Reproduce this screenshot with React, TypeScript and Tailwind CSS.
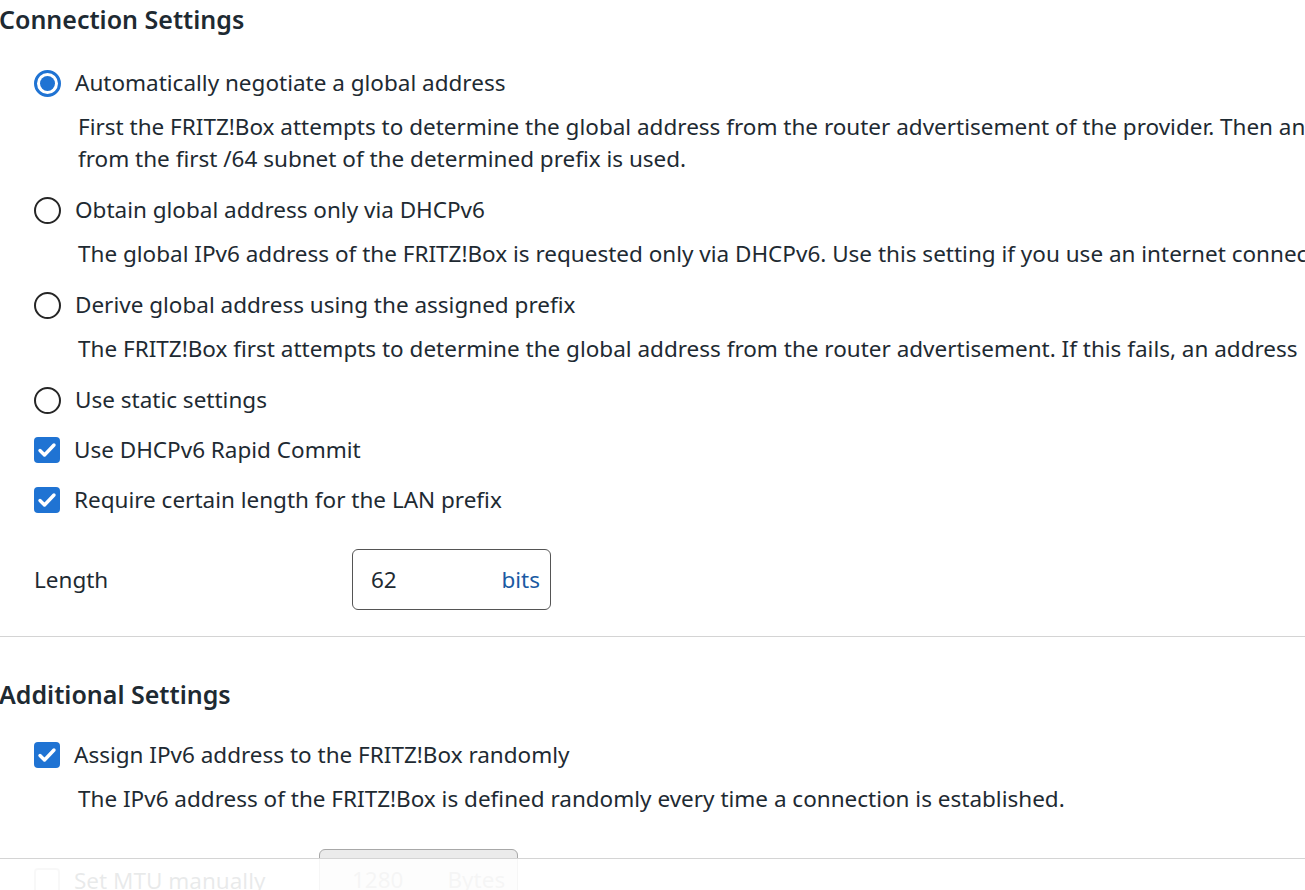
import React from 'react';

const BLUE = 'bg-[#1f73d3]';

function Radio({ checked }: { checked?: boolean }) {
    return checked ? (
        <span className="w-[27px] h-[27px] rounded-full border-[3px] border-[#1f73d3] flex items-center justify-center shrink-0">
            <span className={`w-[15px] h-[15px] rounded-full ${BLUE}`} />
        </span>
    ) : (
        <span className="w-[27px] h-[27px] rounded-full border-[2.5px] border-[#262626] shrink-0" />
    );
}

function Checkbox({ checked, disabled }: { checked?: boolean; disabled?: boolean }) {
    if (!checked) {
        return (
            <span
                className={`w-[26px] h-[26px] rounded-[4px] border-2 shrink-0 ${disabled ? 'border-[#bdbdbd]' : 'border-[#262626]'}`}
            />
        );
    }
    return (
        <span className={`w-[26px] h-[26px] rounded-[4px] ${BLUE} flex items-center justify-center shrink-0`}>
            <svg width="22" height="22" viewBox="0 0 22 22" fill="none">
                <path d="M4 11.5l4.5 4.5L18 6" stroke="white" strokeWidth="3.4" strokeLinecap="round" strokeLinejoin="round" />
            </svg>
        </span>
    );
}

function Option({
    control,
    label,
    desc,
}: {
    control: React.ReactNode;
    label: string;
    desc?: string[];
}) {
    return (
        <div>
            <div className="h-[50px] flex items-center gap-[14px]">
                {control}
                <span className="whitespace-nowrap">{label}</span>
            </div>
            {desc && (
                <div className="pl-[44px] mt-[3px] mb-[10px] leading-[32px] whitespace-nowrap">
                    {desc.map((line) => (
                        <div key={line}>{line}</div>
                    ))}
                </div>
            )}
        </div>
    );
}

export default function App() {
    return (
        <div className="relative h-[890px] w-full overflow-hidden bg-white text-[#1e2a32] text-[22.5px] font-['Noto_Sans',sans-serif]">
            <div className="-ml-[1px]">
                {/* Connection Settings */}
                <h2 className="h-[38px] leading-[38px] text-[25px] font-semibold whitespace-nowrap">Connection Settings</h2>

                <div className="mt-[20px] pl-[35px]">
                    <Option
                        control={<Radio checked />}
                        label="Automatically negotiate a global address"
                        desc={[
                            'First the FRITZ!Box attempts to determine the global address from the router advertisement of the provider. Then an address',
                            'from the first /64 subnet of the determined prefix is used.',
                        ]}
                    />
                    <Option
                        control={<Radio />}
                        label="Obtain global address only via DHCPv6"
                        desc={[
                            'The global IPv6 address of the FRITZ!Box is requested only via DHCPv6. Use this setting if you use an internet connection',
                        ]}
                    />
                    <Option
                        control={<Radio />}
                        label="Derive global address using the assigned prefix"
                        desc={[
                            'The FRITZ!Box first attempts to determine the global address from the router advertisement. If this fails, an address',
                        ]}
                    />
                    <Option control={<Radio />} label="Use static settings" />
                    <Option control={<Checkbox checked />} label="Use DHCPv6 Rapid Commit" />
                    <Option control={<Checkbox checked />} label="Require certain length for the LAN prefix" />

                    <div className="mt-[24px] flex items-center">
                        <span className="w-[318px]">Length</span>
                        <div className="w-[199px] h-[61px] rounded-[6px] border border-[#555] flex items-center justify-between pl-[18px] pr-[10px]">
                            <span>62</span>
                            <span className="text-[#1a5aa3]">bits</span>
                        </div>
                    </div>
                </div>

                <div className="mt-[26px] h-px bg-[#d4d4d4] ml-[1px]" />

                {/* Additional Settings */}
                <h2 className="mt-[38px] h-[38px] leading-[38px] text-[25px] font-semibold whitespace-nowrap">Additional Settings</h2>

                <div className="mt-[17px] pl-[35px]">
                    <Option
                        control={<Checkbox checked />}
                        label="Assign IPv6 address to the FRITZ!Box randomly"
                        desc={['The IPv6 address of the FRITZ!Box is defined randomly every time a connection is established.']}
                    />

                    <div className="mt-[34px] flex items-start">
                        <div className="w-[285px] pt-[15px] flex items-center gap-[14px]">
                            <Checkbox disabled />
                            <span className="whitespace-nowrap">Set MTU manually</span>
                        </div>
                        <div className="w-[199px] h-[61px] rounded-[6px] border border-[#a8a8a8] bg-[#ebebeb] flex items-center pl-[32px] gap-[44px] text-[#9a9a9a]">
                            <span>1280</span>
                            <span>Bytes</span>
                        </div>
                    </div>
                </div>
            </div>

            {/* sticky footer veil */}
            <div className="absolute left-0 right-0 top-[858px] bottom-0 bg-white/90 border-t border-[#d4d4d4]" />
        </div>
    );
}
